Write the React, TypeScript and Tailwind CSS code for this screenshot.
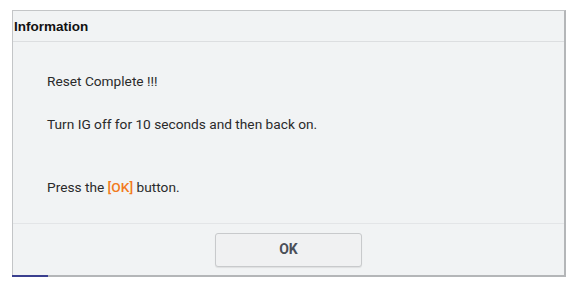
export default function App() {
  return (
    <div className="h-[287px] w-[576px] overflow-hidden bg-white pl-[12px] pt-[10px] font-['Roboto',sans-serif]">
      <div className="flex h-[267px] w-[554px] flex-col border border-b-2 border-r-2 border-[#c3c5c7] border-b-[#b4b6b8] border-r-[#b4b6b8] bg-[#f1f3f4]">
        {/* header */}
        <div className="flex h-[31px] shrink-0 items-center border-b border-[#dcdee0] pl-[1px] pt-[2px] font-['Liberation_Sans',sans-serif] text-[13.5px] font-bold text-[#111]">
          Information
        </div>
        {/* body */}
        <div className="flex flex-1 flex-col pl-[34px] pt-[29px] text-[13.7px] text-[#2a2a2a]">
          <p className="leading-[20px]">Reset Complete !!!</p>
          <p className="mt-[23px] leading-[20px]">Turn IG off for 10 seconds and then back on.</p>
          <p className="mt-[43px] leading-[20px]">
            Press the <span className="font-medium text-[#f27a20]">[OK]</span> button.
          </p>
        </div>
        {/* footer */}
        <div className="flex h-[52px] shrink-0 items-center justify-center border-t border-[#e3e5e7]">
          <button className="h-[34px] w-[147px] rounded-[3px] border border-[#c8cacc] bg-[#f0f1f2] text-[14px] font-bold text-[#4a4f58] shadow-[0_1px_1px_rgba(0,0,0,0.08)]">
            OK
          </button>
        </div>
      </div>
      <div className="h-[2px] w-[36px] -mt-[2px] bg-[#3a3f8f]" />
    </div>
  );
}
